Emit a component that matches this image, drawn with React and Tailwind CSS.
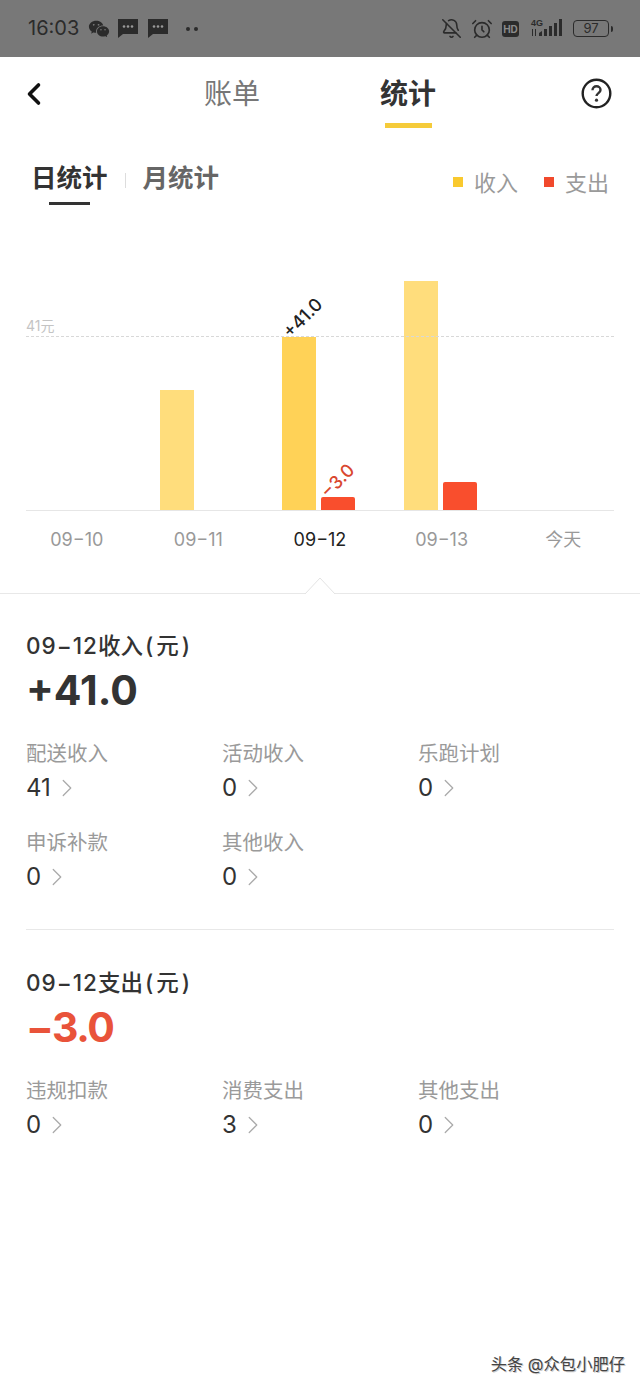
import React from "react";
import { BellOff, AlarmClock, ChevronLeft, ChevronRight } from "lucide-react";
import { RiWechatFill } from "react-icons/ri";

const days = [
  { label: "09−10" },
  { label: "09−11", income: 120 },
  { label: "09−12", income: 173, expense: 13, active: true },
  { label: "09−13", income: 229, expense: 28 },
  { label: "今天" },
];

const Bubble = () => (
  <svg width="20" height="19" viewBox="0 0 20 19">
    <path d="M0 0h20v15H5l-5 4z" fill="#2b2b2b" />
    <circle cx="6" cy="7.5" r="1.3" fill="#999" />
    <circle cx="10" cy="7.5" r="1.3" fill="#999" />
    <circle cx="14" cy="7.5" r="1.3" fill="#999" />
  </svg>
);

const StatusBar = () => (
  <div className="h-[57px] bg-[#787878] flex items-center pl-[28px] pr-[27px] text-[#2b2b2b]">
    <span className="text-[20px] leading-[28px] w-[53px] -mt-[1px]">16:03</span>
    <RiWechatFill className="ml-[7px] w-[22px] h-[22px]" />
    <span className="ml-[8px]"><Bubble /></span>
    <span className="ml-[10px]"><Bubble /></span>
    <span className="ml-[18px] flex gap-[4px]">
      <i className="w-[4px] h-[4px] rounded-full bg-[#2b2b2b]" />
      <i className="w-[4px] h-[4px] rounded-full bg-[#2b2b2b]" />
    </span>

    <BellOff className="ml-auto w-[21px] h-[21px]" strokeWidth={1.8} />
    <AlarmClock className="ml-[9px] w-[22px] h-[22px]" strokeWidth={1.8} />
    <span className="ml-[9px] w-[17px] h-[16px] rounded-[3px] bg-[#2b2b2b] text-[#8a8a8a] text-[10px] leading-[16px] font-bold text-center">HD</span>
    <svg className="ml-[11px]" width="33" height="22" viewBox="0 0 33 22" fill="#2b2b2b">
      <text x="1" y="8" fontSize="9" fontWeight="700" fontFamily="Liberation Sans">4G</text>
      <path d="M2 11h1v7H2zM5 11h1v7H5z" />
      <path d="M9 15l3-2v5H9zM14 11h3v7h-3zM19 8h3v10h-3zM24 5h3v13h-3zM29 1h3v17h-3z" />
    </svg>
    <span className="ml-[10px] w-[36px] h-[17px] rounded-[4px] border-[1.5px] border-[#2b2b2b] text-[13px] leading-[14px] text-center">97</span>
    <i className="ml-[2px] w-[2px] h-[6px] bg-[#2b2b2b] rounded-r" />
  </div>
);

const Header = () => (
  <div className="h-[76px] relative flex items-start">
    <ChevronLeft className="absolute left-[16px] top-[17px] w-[36px] h-[40px] text-[#111]" strokeWidth={2.4} />
    <span className="absolute left-[204px] top-[17px] text-[28px] leading-[40px] text-[#777]">账单</span>
    <div className="absolute left-[380px] top-[17px] flex flex-col items-center">
      <span className="text-[28px] leading-[40px] font-bold text-[#333]">统计</span>
      <i className="block mt-[9px] w-[47px] h-[5px] bg-[#F5CB3A]" />
    </div>
    <svg className="absolute left-[581px] top-[21px]" width="31" height="31" viewBox="0 0 31 31" fill="none">
      <circle cx="15.5" cy="15.5" r="13.8" stroke="#222" strokeWidth="2.4" />
      <path d="M11.5 12.2c0-2.4 1.8-3.9 4-3.9s4 1.5 4 3.6c0 3.2-4 3.2-4 6.2" stroke="#333" strokeWidth="2.4" />
      <circle cx="15.5" cy="22.2" r="1.6" fill="#333" />
    </svg>
  </div>
);

const SubTabs = () => (
  <div className="flex justify-between pl-[31px] pr-[31px] pt-[27px]">
    <div className="flex items-start">
      <div className="flex flex-col items-center">
        <span className="text-[25.5px] leading-[36px] font-bold text-[#333]">日统计</span>
        <i className="block mt-[6px] w-[41px] h-[3px] bg-[#333]" />
      </div>
      <i className="block ml-[17px] mr-[17px] mt-[13px] w-px h-[15px] bg-[#ddd]" />
      <span className="text-[25.5px] leading-[36px] font-bold text-[#666]">月统计</span>
    </div>
    <div className="flex items-start pt-[7px] text-[22px] leading-[32px] text-[#9a9a9a]">
      <i className="block mt-[10px] w-[10px] h-[10px] bg-[#F9C92E]" />
      <span className="ml-[11px]">收入</span>
      <i className="block ml-[26px] mt-[10px] w-[10px] h-[10px] bg-[#F1492C]" />
      <span className="ml-[11px]">支出</span>
    </div>
  </div>
);

const Chart = () => (
  <div className="mt-[76px] mx-[26px] relative">
    <div className="h-[230px] border-b border-[#e6e6e6] relative">
      {/* columns run past the axis line on both sides */}
      <div className="h-full flex -ml-[13px] -mr-[9px] items-end">
        {days.map((d) => (
          <div key={d.label} className="flex-1 flex justify-center items-end gap-[5px]">
            {d.income && (
              <div
                className={"w-[34px] relative " + (d.active ? "bg-[#FFD257]" : "bg-[#FFDD7C]")}
                style={{ height: d.income }}
              >
                {d.active && (
                  <span className="absolute -top-[31px] left-[-3px] -rotate-45 text-[18px] leading-[24px] font-medium text-[#222] whitespace-nowrap">+41.0</span>
                )}
              </div>
            )}
            <div
              className={"w-[34px] relative rounded-t-[2px] bg-[#F94E2D] " + (d.income ? "" : "hidden")}
              style={{ height: d.expense || 0 }}
            >
              {d.active && (
                <span className="absolute -top-[28px] left-[-3px] -rotate-45 text-[18px] leading-[24px] font-medium text-[#D9472F] whitespace-nowrap">−3.0</span>
              )}
            </div>
          </div>
        ))}
      </div>
    </div>
    <div className="absolute left-0 right-0 top-[55px] border-t border-dashed border-[#d8d8d8]" />
    <span className="absolute left-0 top-[36px] text-[14px] leading-[18px] text-[#c4c4c4]">41元</span>
  </div>
);

const DayLabels = () => (
  <div className="flex mx-[16px] mt-[15px]">
    {days.map((d) => (
      <span
        key={d.label}
        className={"flex-1 text-center text-[18px] leading-[28px] " + (d.active ? "text-[#222]" : "text-[#999]")}
      >
        {d.label}
      </span>
    ))}
  </div>
);

const Pointer = () => (
  <div className="mt-[39px] border-t border-[#e8e8e8] relative">
    <svg className="absolute left-[304px] top-[-17px]" width="32" height="18" viewBox="0 0 32 18" fill="none">
      <path d="M1 17L16 1l15 16" fill="#fff" stroke="#e4e4e4" />
      <path d="M2 17.5h28" stroke="#fff" />
    </svg>
  </div>
);

const Item = ({ label, value }) => (
  <div>
    <div className="text-[20.5px] leading-[28px] text-[#9a9a9a]">{label}</div>
    <div className="mt-[5px] flex items-center text-[24px] leading-[30px] text-[#333]">
      {value}
      <ChevronRight className="ml-[1px] -my-[4px] w-[30px] h-[30px] text-[#aaa]" strokeWidth={1} />
    </div>
  </div>
);

const Section = ({ date, kind, total, totalClass, items }) => (
  <div>
    <div className="text-[22.5px] leading-[30px] font-medium text-[#333]">
      <span className="tracking-[1px]">{date}</span>
      {kind}
      <span className="ml-[2px] tracking-[3px]">(元)</span>
    </div>
    <div className={"mt-[4px] text-[41px] leading-[50px] font-bold " + totalClass}>{total}</div>
    <div className="mt-[25px] grid grid-cols-3 gap-y-[26px]">
      {items.map((it) => (
        <Item key={it.label} label={it.label} value={it.value} />
      ))}
    </div>
  </div>
);

export default function App() {
  return (
    <div
      className="w-[640px] h-[1387px] bg-white flex flex-col overflow-hidden"
      style={{ fontFamily: 'Inter, "Noto Sans CJK SC", sans-serif' }}
    >
      <StatusBar />
      <Header />
      <SubTabs />
      <Chart />
      <DayLabels />
      <Pointer />
      <div className="pl-[26px] pr-[26px] pt-[37px]">
        <Section
          date="09−12"
          kind="收入"
          total="+41.0"
          totalClass="text-[#333]"
          items={[
            { label: "配送收入", value: "41" },
            { label: "活动收入", value: "0" },
            { label: "乐跑计划", value: "0" },
            { label: "申诉补款", value: "0" },
            { label: "其他收入", value: "0" },
          ]}
        />
        <div className="mt-[37px] mb-[38px] border-t border-[#e8e8e8]" />
        <Section
          date="09−12"
          kind="支出"
          total="−3.0"
          totalClass="text-[#E9533A] tracking-[-1.5px]"
          items={[
            { label: "违规扣款", value: "0" },
            { label: "消费支出", value: "3" },
            { label: "其他支出", value: "0" },
          ]}
        />
      </div>
      <div className="mt-auto mb-[11px] pr-[15px] text-right text-[16.3px] leading-[24px] text-[#444] [text-shadow:1px_1px_0_#ccc]">
        头条 @众包小肥仔
      </div>
    </div>
  );
}
